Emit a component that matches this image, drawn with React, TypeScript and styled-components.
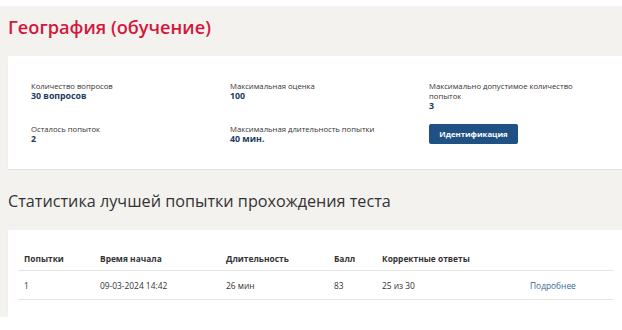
import styled, { createGlobalStyle } from 'styled-components';

const GlobalStyle = createGlobalStyle`
  html, body {
    margin: 0;
    padding: 0;
    background: #fff;
  }
  body {
    font-family: "Open Sans", "Noto Sans", sans-serif;
    color: #333;
  }
`;

const Page = styled.div`
  margin-top: 6px;
  height: 311px;
  overflow: hidden;
  background: #f3f2ef;
  padding-left: 8px;
`;

const Title = styled.h1`
  margin: 0;
  height: 50px;
  padding-top: 8px;
  box-sizing: border-box;
  font-size: 18.2px;
  font-weight: 600;
  line-height: 26px;
  color: #d3173b;
`;

const Card = styled.section<{ $pad: string }>`
  background: #fff;
  padding: ${(p) => p.$pad};
  box-shadow: 0 1px 1px rgba(0, 0, 0, 0.06);
`;

const InfoGrid = styled.div`
  display: grid;
  grid-template-columns: 199px 199px 160px;
  row-gap: 13px;
  align-items: start;
`;

const Field = styled.div`
  display: flex;
  flex-direction: column;
`;

const Label = styled.span`
  font-size: 7.7px;
  line-height: 10px;
  color: #333;
`;

const Value = styled.span`
  font-size: 8.8px;
  line-height: 10px;
  font-weight: 700;
  color: #1d3b63;
`;

const Button = styled.button`
  width: 89px;
  height: 20px;
  padding: 0;
  border: none;
  border-radius: 2px;
  background: #1f5185;
  color: #fff;
  font-family: "Open Sans", sans-serif;
  font-size: 7.8px;
  font-weight: 700;
  cursor: pointer;
`;

const Heading = styled.h2`
  margin: 0;
  height: 61px;
  padding-top: 20px;
  box-sizing: border-box;
  font-size: 16.2px;
  font-weight: 400;
  line-height: 24px;
  color: #333;
`;

const Row = styled.div<{ $head?: boolean }>`
  display: grid;
  grid-template-columns: 76px 126px 108px 48px 148px 1fr;
  height: ${(p) => (p.$head ? '24px' : '28px')};
  align-items: center;
  border-bottom: 1px solid #e4e4e4;
  font-size: 8.4px;
  font-weight: ${(p) => (p.$head ? 700 : 400)};
  color: #333;
`;

const Cell = styled.div`
  padding-left: 6px;
`;

const Link = styled.a`
  color: #3a6797;
  text-decoration: none;
`;

const fields = [
  { label: 'Количество вопросов', value: '30 вопросов' },
  { label: 'Максимальная оценка', value: '100' },
  { label: 'Максимально допустимое количество попыток', value: '3' },
  { label: 'Осталось попыток', value: '2' },
  { label: 'Максимальная длительность попытки', value: '40 мин.' },
];

const head = ['Попытки', 'Время начала', 'Длительность', 'Балл', 'Корректные ответы', ''];
const attempt = ['1', '09-03-2024 14:42', '26 мин', '83', '25 из 30'];

export default function App() {
  return (
    <>
      <GlobalStyle />
      <Page>
        <Title>География (обучение)</Title>
        <Card $pad="25px 0 25px 23px">
          <InfoGrid>
            {fields.map((f) => (
              <Field key={f.label}>
                <Label>{f.label}</Label>
                <Value>{f.value}</Value>
              </Field>
            ))}
            <Field>
              <Button>Идентификация</Button>
            </Field>
          </InfoGrid>
        </Card>
        <Heading>Статистика лучшей попытки прохождения теста</Heading>
        <Card $pad="16px 9px 30px 10px">
          <Row $head>
            {head.map((h, i) => (
              <Cell key={i}>{h}</Cell>
            ))}
          </Row>
          <Row>
            {attempt.map((a, i) => (
              <Cell key={i}>{a}</Cell>
            ))}
            <Cell>
              <Link href="#">Подробнее</Link>
            </Cell>
          </Row>
        </Card>
      </Page>
    </>
  );
}
